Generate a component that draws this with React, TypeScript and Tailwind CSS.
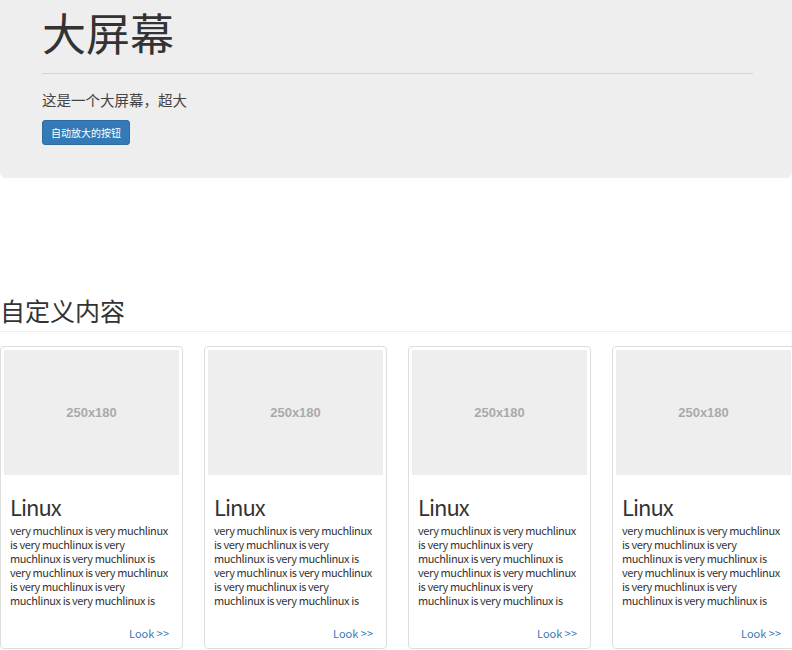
export default function App() {
  const cards = [1, 2, 3, 4];
  const body = Array(10).fill("very muchlinux is").join(" ");

  return (
    <div className="w-[792px] h-[650px] overflow-hidden bg-white text-[#333] font-['Noto_Sans_CJK_SC',sans-serif]">
      {/* jumbotron */}
      <div className="bg-[#eee] rounded-b-md px-[42px] pt-[6px] h-[178px]">
        <h1 className="text-[44px] leading-[52px] font-normal">大屏幕</h1>
        <hr className="mt-[15px] border-t border-[#d5d5d5] mr-[-3px]" />
        <p className="mt-[16px] text-[14.5px] leading-[20px] text-[#444]">这是一个大屏幕，超大</p>
        <button className="mt-[10px] h-[25px] px-[8px] text-[10px] text-white bg-[#337ab7] border border-[#2e6da4] rounded-[3px]">
          自动放大的按钮
        </button>
      </div>

      {/* section header */}
      <div className="mt-[114px] pb-[3px] border-b border-[#eee]">
        <h2 className="text-[25px] leading-[36px] font-normal">自定义内容</h2>
      </div>

      <div className="mt-[14px] flex gap-[21px]">
        {cards.map((c) => (
          <div
            key={c}
            className="w-[183px] shrink-0 h-[303px] border border-[#ddd] rounded-[4px] p-[3px] flex flex-col"
          >
            <div className="h-[125px] bg-[#eee] flex items-center justify-center text-[13px] font-bold text-[#aaa] font-['Liberation_Sans',sans-serif]">
              250x180
            </div>
            <div className="px-[6px] pt-[16px] flex flex-col flex-1">
              <h3 className="text-[22px] leading-[30px] font-normal tracking-[-1px]">Linux</h3>
              <p className="mt-[2px] text-[11px] leading-[14px] text-[#333] tracking-[-0.4px]">{body}</p>
              <div className="mt-auto pb-[4px] text-right text-[11px] text-[#337ab7] pr-[4px]">
                Look &gt;&gt;
              </div>
            </div>
          </div>
        ))}
      </div>
    </div>
  );
}
